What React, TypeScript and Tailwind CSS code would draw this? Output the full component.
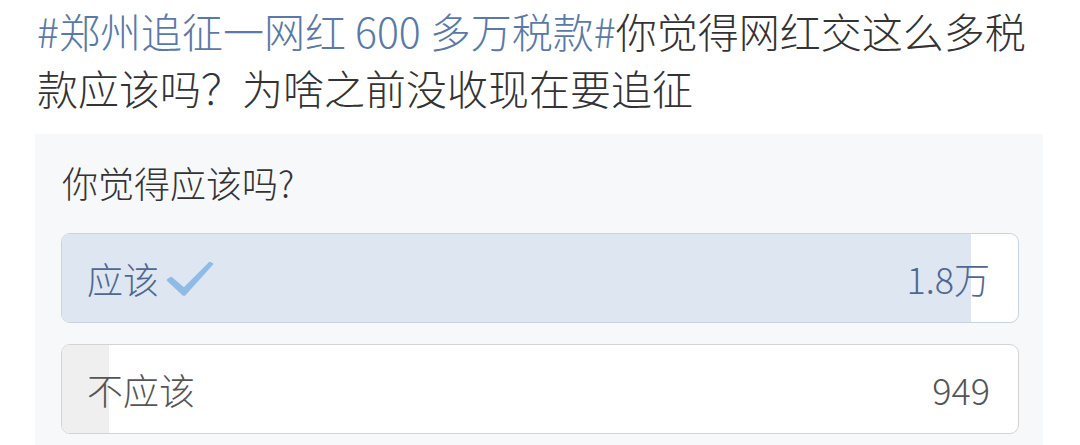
import React from "react";

const font = { fontFamily: '"Noto Sans CJK SC", "Noto Sans", sans-serif' };

function Check() {
  return (
    <svg width="50" height="40" viewBox="0 0 50 40" className="ml-[6px] mt-[4px]">
      <path
        d="M3 20 L18 34 Q19 35 20 34 L47 4 L45 3 L19 29 L6 18 Z"
        fill="#8fbbe6"
        stroke="#8fbbe6"
        strokeWidth="2.5"
        strokeLinejoin="round"
      />
    </svg>
  );
}

function Option({
  label,
  count,
  pct,
  selected,
}: {
  label: string;
  count: string;
  pct: number;
  selected?: boolean;
}) {
  return (
    <div
      className={
        "relative h-[90px] rounded-[9px] border overflow-hidden bg-white " +
        (selected ? "border-[#c9d3df]" : "border-[#d4d4d4]")
      }
    >
      <div
        className={"absolute left-0 top-0 bottom-0 " + (selected ? "bg-[#dee6f1]" : "bg-[#efefef]")}
        style={{ width: `${pct}%` }}
      />
      <div className="relative h-full flex items-center justify-between pl-[25px] pr-[28px]">
        <div className="flex items-center">
          <span className={"text-[36px] leading-none " + (selected ? "text-[#4f6890]" : "text-[#555555]")}>
            {label}
          </span>
          {selected && <Check />}
        </div>
        <span className={"text-[36px] leading-none " + (selected ? "text-[#4f6890]" : "text-[#555555]")}>
          {count}
        </span>
      </div>
    </div>
  );
}

export default function App() {
  return (
    <div className="w-[1080px] h-[445px] overflow-hidden bg-white font-light" style={font}>
      <p className="pl-[37px] pt-[2px] w-[1050px] text-[41px] leading-[57px] text-[#333333]">
        <span className="text-[#5a79a6]">#郑州追征一网红 600 多万税款#</span>你觉得网红交这么多税款应该吗？为啥之前没收现在要追征
      </p>
      <div className="ml-[35px] mt-[18px] w-[1008px] h-[400px] bg-[#f7f8fa] pt-[24px] pl-[26px] pr-[24px]">
        <div className="pl-[1px] text-[36px] leading-[48px] text-[#333333]">你觉得应该吗?</div>
        <div className="mt-[27px] flex flex-col gap-[21px]">
          <Option label="应该" count="1.8万" pct={95.1} selected />
          <Option label="不应该" count="949" pct={4.9} />
        </div>
      </div>
    </div>
  );
}
